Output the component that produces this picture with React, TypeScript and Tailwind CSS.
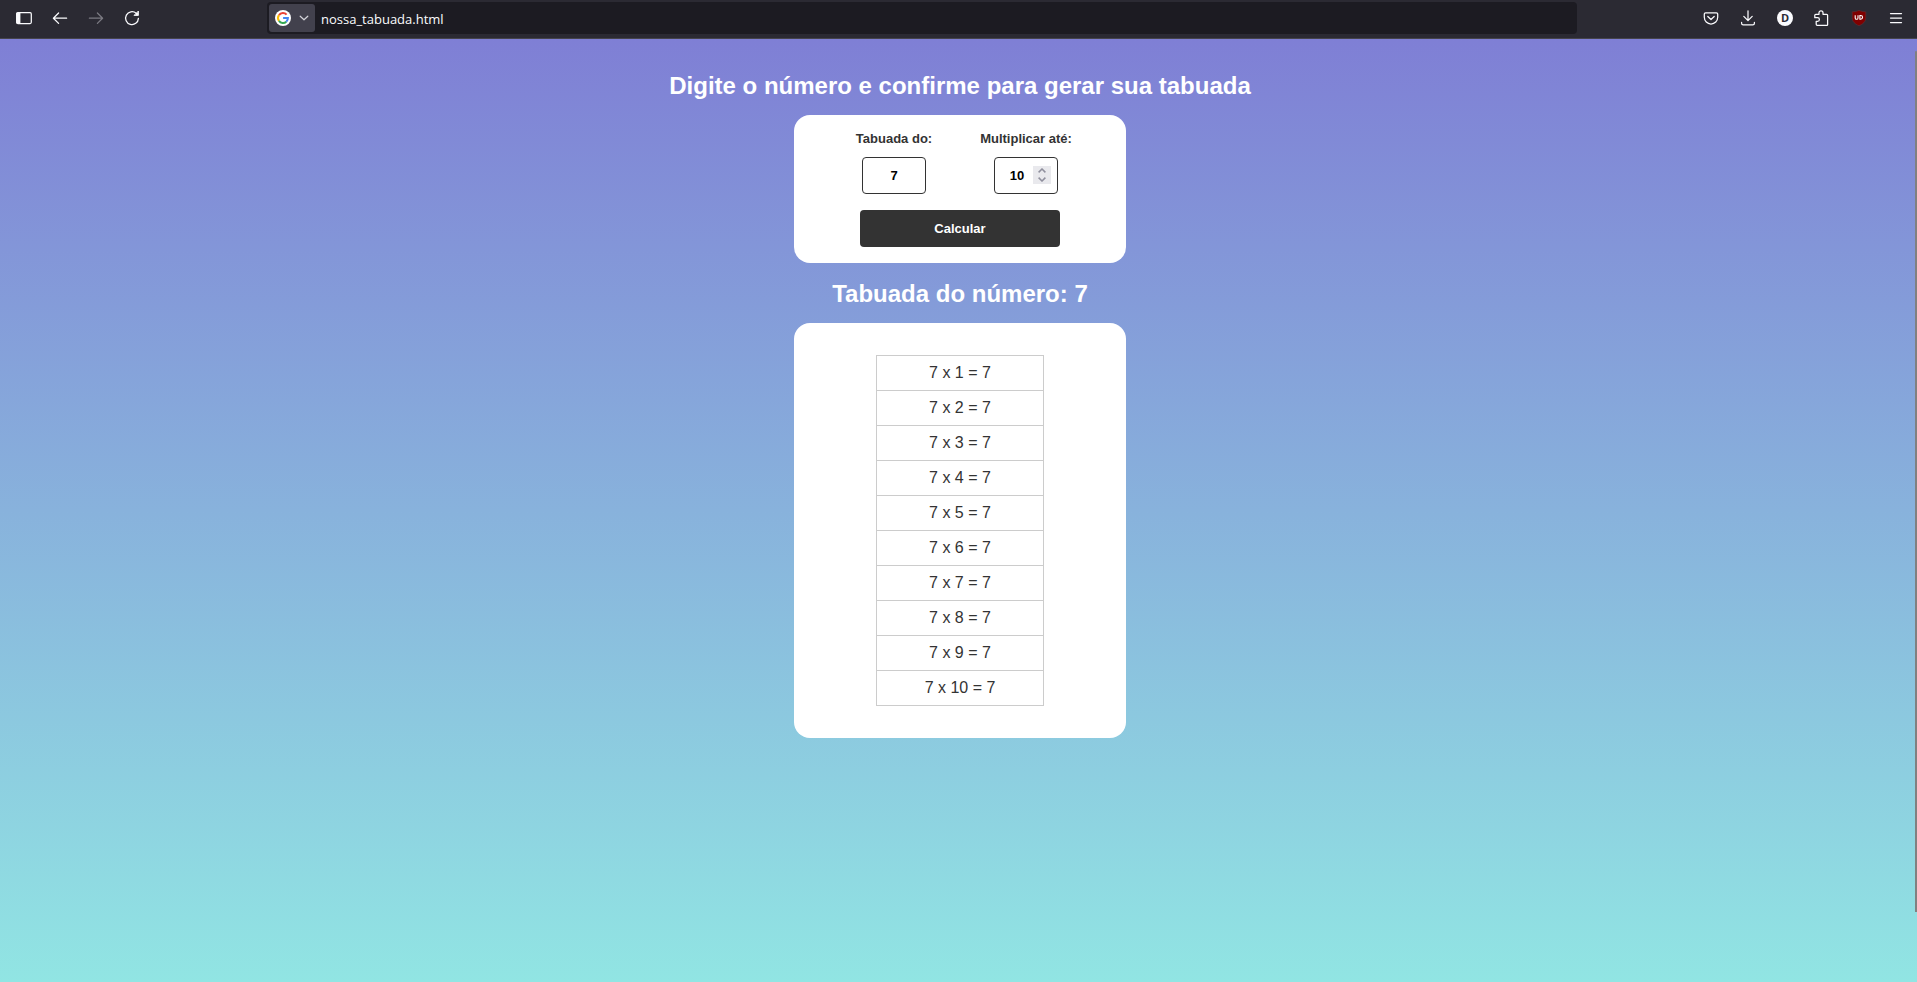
import { useState } from "react";
import type { FormEvent, ReactNode } from "react";

function ToolButton({ label, dim, children }: { label: string; dim?: boolean; children: ReactNode }) {
  return (
    <button
      type="button"
      aria-label={label}
      disabled={dim}
      className="flex h-8 w-9 items-center justify-center rounded text-[#fbfbfe] disabled:text-[#7b7a82]"
    >
      {children}
    </button>
  );
}

const stroke = {
  width: 16,
  height: 16,
  viewBox: "0 0 16 16",
  fill: "none",
  stroke: "currentColor",
  strokeWidth: 1.25,
  strokeLinecap: "round" as const,
  strokeLinejoin: "round" as const,
};

function Toolbar() {
  const [url, setUrl] = useState("nossa_tabuada.html");
  return (
    <header className="flex h-[39px] items-center border-b border-[#45444c] bg-[#2b2a33] pr-[3px] pl-1.5">
      <nav className="mb-0.5 flex w-[261px] shrink-0">
        <ToolButton label="Barra lateral">
          <svg {...stroke}>
            <rect x="0.7" y="2.7" width="14.6" height="10.8" rx="1.2" />
            <path d="M1 3h3v10.2H1z" fill="currentColor" strokeWidth="0.8" />
          </svg>
        </ToolButton>
        <ToolButton label="Voltar">
          <svg {...stroke}>
            <path d="M14.6 8.2H1.6M6.6 3L1.4 8.2l5.2 5.2" />
          </svg>
        </ToolButton>
        <ToolButton label="Avançar" dim>
          <svg {...stroke}>
            <path d="M1.4 8.2h13M9.4 3l5.2 5.2-5.2 5.2" />
          </svg>
        </ToolButton>
        <ToolButton label="Recarregar">
          <svg {...stroke}>
            <path d="M14.4 8.4a6.4 6.4 0 1 1-2.2-5.1l1 1" />
            <path d="M14.4 1.4v4h-4z" fill="currentColor" strokeWidth="0.9" />
          </svg>
        </ToolButton>
      </nav>
      <div className="mb-0.5 flex h-8 w-[1310px] shrink items-center rounded bg-[#1c1b22] pl-0.5">
        <button type="button" aria-label="Mecanismo de busca" className="flex h-7 w-[46px] items-center gap-2 rounded-[3px] bg-[#42414d] pl-1.5">
          <svg width="16" height="16" viewBox="0 0 16 16">
            <circle cx="8" cy="8" r="8" fill="#fff" />
            <g fill="none" strokeWidth="2">
              <path d="M4 5.1A4.9 4.9 0 0 1 11.6 4.7" stroke="#ea4335" />
              <path d="M4 5.1a4.9 4.9 0 0 0 0 5.8" stroke="#fbbc05" />
              <path d="M4 10.9a4.9 4.9 0 0 0 7.3.8" stroke="#34a853" />
              <path d="M11.3 11.7A4.9 4.9 0 0 0 12.9 8H8.1" stroke="#4285f4" />
            </g>
          </svg>
          <svg width="10" height="10" viewBox="0 0 10 10" fill="none" stroke="#d4d4da" strokeWidth="1.2" strokeLinecap="round" strokeLinejoin="round">
            <path d="M1.2 3.2L5 6.8l3.8-3.6" />
          </svg>
        </button>
        <input
          aria-label="Endereço"
          value={url}
          onChange={(e) => setUrl(e.target.value)}
          className="h-7 min-w-0 flex-1 bg-transparent pt-0.5 pl-1.5 font-['Open_Sans',sans-serif] text-[13px] text-[#fbfbfe] outline-none"
        />
      </div>
      <nav className="mb-0.5 ml-auto flex shrink-0 gap-px">
        <ToolButton label="Salvar no Pocket">
          <svg {...stroke}>
            <path d="M2.6 2.8h10.8a1.3 1.3 0 0 1 1.3 1.3v3.2a6.7 6.7 0 0 1-13.4 0V4.1a1.3 1.3 0 0 1 1.3-1.3z" />
            <path d="M4.8 6.5L8 9.5l3.200-3" />
          </svg>
        </ToolButton>
        <ToolButton label="Downloads">
          <svg {...stroke}>
            <path d="M8 .8v9.6M3.8 6.4L8 10.6l4.2-4.2M1.6 12.4v.8a1.6 1.6 0 0 0 1.6 1.6h9.6a1.6 1.6 0 0 0 1.6-1.6v-.8" />
          </svg>
        </ToolButton>
        <ToolButton label="Conta">
          <span className="flex size-4 items-center justify-center rounded-full bg-[#fbfbfe] font-['Open_Sans',sans-serif] text-[11px] font-bold text-[#2b2a33]">D</span>
        </ToolButton>
        <ToolButton label="Extensões">
          <svg {...stroke}>
            <path d="M5 4.300V2.800a2 2 0 0 1 4 0v1.500h3.600a1 1 0 0 1 1 1v9.400a.6.6 0 0 1-.6.6H3.200a1 1 0 0 1-1-1v-3h1.400a1.800 1.800 0 0 0 0-3.600H.8V5.300a1 1 0 0 1 1-1z" />
          </svg>
        </ToolButton>
        <ToolButton label="uBlock Origin">
          <svg width="16" height="16" viewBox="0 0 16 16">
            <path d="M8 .3c2 1 4.3 1.5 6.800 1.500v6c0 4-3 6.300-6.800 8-3.800-1.700-6.800-4-6.800-8v-6C3.700 1.800 6 1.300 8 .3z" fill="#800000" stroke="#5d3438" strokeWidth="0.6" />
            <path d="M4.200 5.300v2.600a1.400 1.400 0 0 0 2.800 0V5.300M8.900 5.500v3.700h.8a1.850 1.850 0 0 0 0-3.700z" fill="none" stroke="#fff" strokeWidth="1.1" />
          </svg>
        </ToolButton>
        <ToolButton label="Menu">
          <svg {...stroke}>
            <path d="M2.500 3.500h11M2.500 8h11M2.500 12.500h11" />
          </svg>
        </ToolButton>
      </nav>
    </header>
  );
}

const fieldClass =
  "h-[37px] w-16 rounded border border-[#333] bg-white text-[13px] font-bold text-black outline-none [appearance:textfield] [&::-webkit-inner-spin-button]:appearance-none";

export default function App() {
  const [base, setBase] = useState("7");
  const [limit, setLimit] = useState(10);
  const [result, setResult] = useState({ base: "7", limit: 10 });

  const submit = (e: FormEvent) => {
    e.preventDefault();
    setResult({ base, limit });
  };
  const rows = Array.from({ length: result.limit }, (_, i) => i + 1);

  return (
    <div className="flex min-h-screen flex-col bg-[#91e5e3] font-['Liberation_Sans',Arial,sans-serif] text-[#333]">
      <Toolbar />
      <main className="relative flex flex-1 flex-col items-center gap-4 bg-linear-to-b/srgb from-[#7f7fd5] to-[#91e5e3] pt-8 pl-[3px]">
        <h1 className="pt-0.5 text-2xl/[26px] font-bold text-white">Digite o número e confirme para gerar sua tabuada</h1>

        <form onSubmit={submit} className="flex w-[332px] flex-col items-center gap-4 rounded-2xl bg-white p-4">
          <div className="grid grid-cols-[132px_132px]">
            <div className="flex flex-col items-center gap-2.5">
              <label htmlFor="base" className="text-[13px]/4 font-bold">Tabuada do:</label>
              <input id="base" type="number" value={base} onChange={(e) => setBase(e.target.value)} className={`${fieldClass} text-center`} />
            </div>
            <div className="flex flex-col items-center gap-2.5">
              <label htmlFor="limit" className="text-[13px]/4 font-bold">Multiplicar até:</label>
              <div className="relative">
                <input id="limit" type="number" value={limit} onChange={(e) => setLimit(Number(e.target.value))} className={`${fieldClass} pr-[18px] text-center`} />
                <div className="absolute top-[9px] right-[7px] flex h-[18px] w-[18px] flex-col bg-[#e9e9ed] text-[#8f8f9d]">
                  <button type="button" aria-label="Aumentar" onClick={() => setLimit(limit + 1)} className="flex flex-1 items-center justify-center">
                    <svg width="8" height="5" viewBox="0 0 8 5" fill="none" stroke="currentColor" strokeWidth="1.5"><path d="M.6 4.400L4 1l3.400 3.400" /></svg>
                  </button>
                  <button type="button" aria-label="Diminuir" onClick={() => setLimit(Math.max(1, limit - 1))} className="flex flex-1 items-center justify-center">
                    <svg width="8" height="5" viewBox="0 0 8 5" fill="none" stroke="currentColor" strokeWidth="1.5"><path d="M.6 .6L4 4L7.400 .6" /></svg>
                  </button>
                </div>
              </div>
            </div>
          </div>
          <button type="submit" className="h-[37px] w-[200px] rounded bg-[#333] text-[13px] font-bold text-white">Calcular</button>
        </form>

        <h2 className="pt-0.5 text-2xl/[26px] font-bold text-white">Tabuada do número: {result.base}</h2>

        <section className="flex w-[332px] justify-center rounded-2xl bg-white p-8">
          <table className="w-[168px] border-collapse text-center text-base/[18px]">
            <tbody>
              {rows.map((n) => (
                <tr key={n}>
                  <td className="border border-[#ccc] py-2">{`${result.base} x ${n} = ${result.base}`}</td>
                </tr>
              ))}
            </tbody>
          </table>
        </section>

        <div className="absolute top-3 right-0 h-[861px] w-0.5 rounded-t bg-[#808080]" />
      </main>
    </div>
  );
}
